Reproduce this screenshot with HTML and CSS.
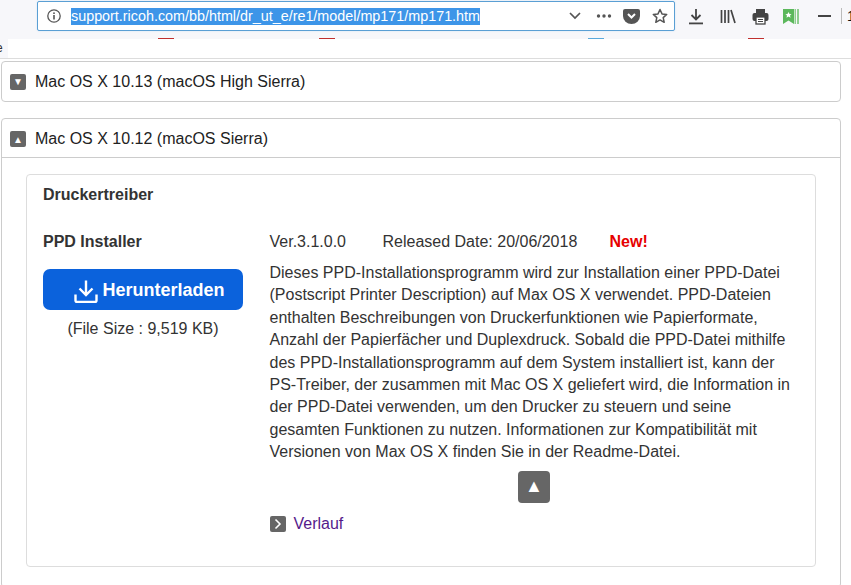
FILE: index.html

```html
<!DOCTYPE html>
<html lang="de">
<head>
    <meta charset="UTF-8">
    <title>PPD Installer</title>
    <link rel="stylesheet" href="styles.css">
</head>
<body>

<div class="toolbar">
    <div class="urlbar">
        <svg class="info" width="16" height="16" viewBox="0 0 16 16"><circle cx="8" cy="8" r="6.2" fill="none" stroke="#555" stroke-width="1.3"/><rect x="7.2" y="7" width="1.6" height="4.5" fill="#555"/><rect x="7.2" y="4.4" width="1.6" height="1.6" fill="#555"/></svg>
        <span class="url">support.ricoh.com/bb/html/dr_ut_e/re1/model/mp171/mp171.htm</span>
        <svg class="chevron" width="14" height="10" viewBox="0 0 14 10"><path d="M2 2l5 5 5-5" fill="none" stroke="#555" stroke-width="1.7"/></svg>
        <svg class="dots" width="16" height="4" viewBox="0 0 16 4"><circle cx="2.5" cy="2" r="1.7" fill="#555"/><circle cx="8" cy="2" r="1.7" fill="#555"/><circle cx="13.5" cy="2" r="1.7" fill="#555"/></svg>
        <svg class="pocket" width="17" height="15" viewBox="0 0 17 15"><path d="M2 0h13a2 2 0 0 1 2 2v5a8.500 8 0 0 1-17 0V2a2 2 0 0 1 2-2z" fill="#555"/><path d="M5 5l3.500 3.500L12 5" fill="none" stroke="#fff" stroke-width="2"/></svg>
        <svg class="star" width="16" height="16" viewBox="0 0 16 16"><path d="M8 1.500l2 4.400 4.700.5-3.500 3.200 1 4.700L8 11.900l-4.200 2.400 1-4.700L1.300 6.400 6 5.900z" fill="none" stroke="#555" stroke-width="1.500" stroke-linejoin="round"/></svg>
    </div>
    <div class="tools">
        <svg width="16" height="17" viewBox="0 0 16 17"><path d="M8 1v10M3.500 7L8 11.500 12.500 7" fill="none" stroke="#444" stroke-width="1.800"/><rect x="1" y="14.500" width="14" height="1.800" fill="#444"/></svg>
        <svg width="16" height="15" viewBox="0 0 16 15"><path d="M1.500 1v13M5 1v13M8.500 1v13M11 1l4 13" fill="none" stroke="#444" stroke-width="1.700"/></svg>
        <svg class="printer" width="17" height="17" viewBox="0 0 17 17"><rect x="4" y="1" width="9" height="4" fill="#444"/><rect x="0.500" y="5" width="16" height="8" rx="2" fill="#444"/><rect x="4" y="9" width="9" height="7" fill="#fff" stroke="#444" stroke-width="1.300"/><rect x="6" y="11" width="5" height="1" fill="#444"/><rect x="6" y="13" width="5" height="1" fill="#444"/></svg>
        <svg width="16" height="15" viewBox="0 0 16 15"><path d="M0 0h11v15L5.500 11.500 0 15z" fill="#5cb85c"/><path d="M11.500 0H13v15h-1.500zM14 0h2v15h-2z" fill="#8fce8f"/><path d="M5.500 3l1 2 2.100.2-1.600 1.400.5 2.100-2-1.100-2 1.100.5-2.100L2.400 5.200l2.100-.2z" fill="#fff"/></svg>
        <span class="minimize"></span>
        <span class="sep"></span>
        <span class="cut">1</span>
    </div>
</div>

<div class="tabmarks">
    <span class="mark red m1"></span>
    <span class="mark red m2"></span>
    <span class="mark blue m3"></span>
    <span class="mark red m4"></span>
</div>

<div class="topstrip"><span class="stub">e</span></div>

<div class="content">
    <div class="panel">
        <div class="panel-head">
            <span class="arrow-box">&#9660;</span>
            Mac OS X 10.13 (macOS High Sierra)
        </div>
    </div>

    <div class="panel open">
        <div class="panel-head">
            <span class="arrow-box">&#9650;</span>
            Mac OS X 10.12 (macOS Sierra)
        </div>
        <div class="panel-body">
            <div class="card">
                <h2>Druckertreiber</h2>
                <div class="driver">
                    <div class="driver-left">
                        <h3>PPD Installer</h3>
                        <a class="btn" href="#">
                            <svg width="24" height="24" viewBox="0 0 24 24"><path d="M12 1.500v14M5.500 9.500L12 16l6.500-6.500" fill="none" stroke="#fff" stroke-width="2.400"/><path d="M1.500 15.500v6a1.500 1.500 0 0 0 1.500 1.500h18a1.500 1.500 0 0 0 1.500-1.500v-6" fill="none" stroke="#fff" stroke-width="2.400"/></svg>
                            Herunterladen
                        </a>
                        <p class="size">(File Size : 9,519 KB)</p>
                    </div>
                    <div class="driver-right">
                        <div class="meta">
                            <span class="ver">Ver.3.1.0.0</span>
                            <span class="date">Released Date: 20/06/2018</span>
                            <span class="new">New!</span>
                        </div>
                        <p class="desc">Dieses PPD-Installationsprogramm wird zur Installation einer PPD-Datei<br>(Postscript Printer Description) auf Max OS X verwendet. PPD-Dateien<br>enthalten Beschreibungen von Druckerfunktionen wie Papierformate,<br>Anzahl der Papierfächer und Duplexdruck. Sobald die PPD-Datei mithilfe<br>des PPD-Installationsprogramm auf dem System installiert ist, kann der<br>PS-Treiber, der zusammen mit Mac OS X geliefert wird, die Information in<br>der PPD-Datei verwenden, um den Drucker zu steuern und seine<br>gesamten Funktionen zu nutzen. Informationen zur Kompatibilität mit<br>Versionen von Max OS X finden Sie in der Readme-Datei.</p>
                        <div class="collapse"><span class="collapse-btn">&#9650;</span></div>
                        <a class="history" href="#">
                            <span class="arrow-box small"><svg width="10" height="12" viewBox="0 0 10 12"><path d="M2.500 1.500L7 6l-4.500 4.500" fill="none" stroke="#fff" stroke-width="1.600"/></svg></span>
                            Verlauf
                        </a>
                    </div>
                </div>
            </div>
        </div>
    </div>
</div>

</body>
</html>
```

FILE: styles.css

```css
html, body { margin: 0; padding: 0; }
body { font-family: "Liberation Sans", Arial, sans-serif; background: white; color: #222; width: 851px; height: 585px; overflow: hidden; position: relative; }

.toolbar { height: 39px; background: #f7f7fa; display: flex; box-sizing: border-box; padding-left: 37px; }
.urlbar { width: 638px; height: 30px; margin-top: 1px; box-sizing: border-box; background: white; border: 1px solid #5a9fd4; border-radius: 2px; display: flex; align-items: center; padding: 0 6px 0 8px; box-shadow: 0 0 2px #cfe3f5; }
.info { margin-right: 9px; flex: none; }
.url { font-size: 14.35px; background: #3d95e8; color: white; line-height: 17px; flex: none; }
.chevron { margin-left: auto; }
.dots { margin-left: 14px; }
.pocket { margin-left: 11px; }
.star { margin-left: 12px; }

.tools { display: flex; align-items: center; height: 30px; margin-top: 1px; padding-left: 13px; flex: 1; overflow: hidden; }
.tools svg { flex: none; margin-right: 16px; }
.tools .printer { margin-right: 14px; }
.minimize { width: 13px; height: 2px; background: #444; margin-left: 3px; flex: none; }
.sep { width: 1px; height: 16px; background: #bbb; margin-left: 10px; flex: none; }
.cut { font-size: 14px; margin-left: 5px; color: #111; }

.tabmarks { position: absolute; left: 0; top: 38px; display: flex; height: 1px; }
.mark { height: 1px; width: 16px; }
.red { background: #c0302e; }
.blue { background: #5aa9dc; }
.m1 { margin-left: 158px; }
.m2 { margin-left: 145px; }
.m3 { margin-left: 253px; }
.m4 { margin-left: 144px; }

.topstrip { height: 19px; border-bottom: 1px solid #ddd; }
.stub { display: block; width: 12px; height: 19px; background: #f7f7fa; font-size: 12px; line-height: 18px; margin-left: -4px; padding-left: 0; color: #333; }

.content { padding: 2px 10px 0 1px; }
.panel { border: 1px solid #ccc; border-radius: 4px; margin-bottom: 16px; }
.panel-head { display: flex; align-items: center; height: 39px; padding-left: 8px; font-size: 16px; color: #222; }
.arrow-box { width: 16px; height: 16px; background: #666; color: white; border-radius: 2px; font-size: 10px; display: inline-flex; align-items: center; justify-content: center; margin-right: 9px; flex: none; }
.open .panel-head { border-bottom: 1px solid #ccc; height: 39px; padding-top: 2px; box-sizing: border-box; }
.panel-body { padding: 16px 24px 20px 24px; }

.card { border: 1px solid #ddd; border-radius: 4px; height: 393px; box-sizing: border-box; padding: 11px 16px 0 16px; }
h2 { margin: 0; font-size: 16px; line-height: 18px; color: #333; }
.driver { display: flex; margin-top: 29px; }
.driver-left { width: 200px; flex: none; margin-right: 26.5px; }
h3 { margin: 0; font-size: 16px; line-height: 18px; color: #333; }
.btn { display: flex; align-items: center; justify-content: center; height: 41px; margin-top: 18px; padding: 2px 0 0 13px; background: #0b62dc; color: white; font-size: 18px; font-weight: bold; text-decoration: none; border-radius: 7px; gap: 4px; box-sizing: border-box; }
.size { margin: 10px 0 0 0; text-align: center; font-size: 16px; line-height: 18px; color: #333; }

.meta { font-size: 16px; line-height: 18px; color: #333; display: flex; }
.ver { width: 113px; }
.date { width: 227px; }
.new { color: #e60000; font-weight: bold; }
.desc { margin: 11px 0 0 0; font-size: 16px; line-height: 22.4px; color: #333; white-space: nowrap; }
.collapse { display: flex; justify-content: center; margin-top: 7px; width: 529px; }
.collapse-btn { width: 32px; height: 32px; background: #666; color: white; border-radius: 4px; display: flex; align-items: center; justify-content: center; font-size: 18px; }
.history { display: flex; align-items: center; margin-top: 11px; color: #551a8b; font-size: 16px; text-decoration: none; padding-top: 1px; }
.small { margin-right: 8px; }
```
